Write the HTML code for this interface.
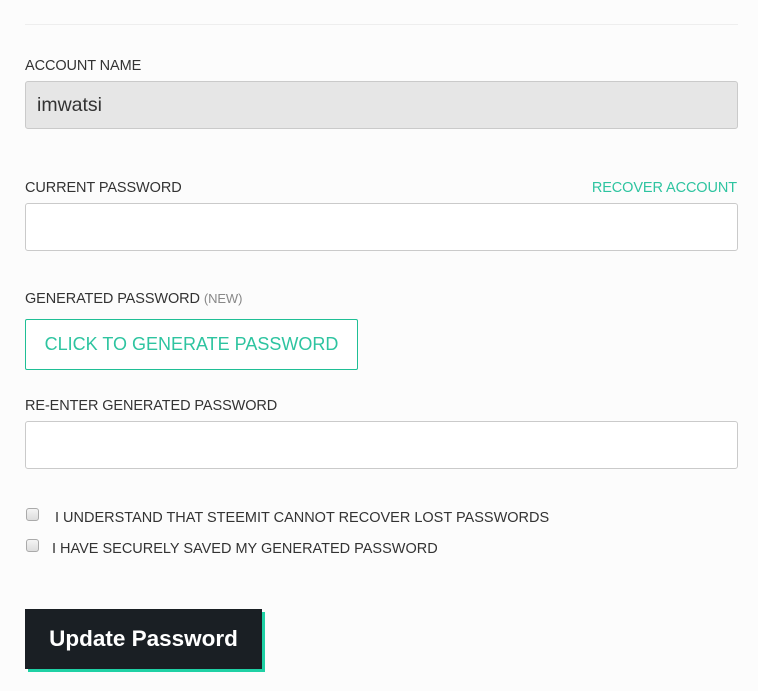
<!DOCTYPE html>
<html><head><style>
body{margin:0;width:758px;height:691px;background:#fcfcfc;font-family:"Liberation Sans",sans-serif;position:relative;overflow:hidden;color:#333}
.a{position:absolute}
.lbl{font-size:14.5px;letter-spacing:-0.1px;color:#333;line-height:16px}
.inp{left:25px;width:711px;height:46px;border:1px solid #cacaca;border-radius:3px;background:#fff;box-sizing:content-box}
.cb{width:11px;height:11px;border:1px solid #aaa;border-radius:3px;background:linear-gradient(#f4f4f4,#ddd);left:26px}
</style></head><body>
<div class="a" style="left:25px;top:24px;width:713px;height:1px;background:#eee"></div>
<div class="a lbl" style="left:25px;top:58px">ACCOUNT NAME</div>
<div class="a inp" style="top:81px;background:#e6e6e6;"></div>
<div class="a" style="left:37px;top:94px;font-size:19.5px;color:#333">imwatsi</div>
<div class="a lbl" style="left:25px;top:180px">CURRENT PASSWORD</div>
<div class="a lbl" style="right:21px;top:180px;color:#2ec4a0">RECOVER ACCOUNT</div>
<div class="a inp" style="top:203px"></div>
<div class="a lbl" style="left:25px;top:291px">GENERATED PASSWORD <span style="color:#888;font-size:13px">(NEW)</span></div>
<div class="a" style="left:25px;top:319px;width:331px;height:49px;border:1px solid #1fbf95;border-radius:2px;background:#fff;color:#2ec4a0;font-size:18px;line-height:49px;text-align:center">CLICK TO GENERATE PASSWORD</div>
<div class="a lbl" style="left:25px;top:398px">RE-ENTER GENERATED PASSWORD</div>
<div class="a inp" style="top:421px"></div>
<div class="a cb" style="top:508px"></div>
<div class="a lbl" style="left:55px;top:510px;letter-spacing:0px">I UNDERSTAND THAT STEEMIT CANNOT RECOVER LOST PASSWORDS</div>
<div class="a cb" style="top:539px"></div>
<div class="a lbl" style="left:52px;top:541px;letter-spacing:0px">I HAVE SECURELY SAVED MY GENERATED PASSWORD</div>
<div class="a" style="left:28px;top:612px;width:237px;height:60px;background:#1fd1a5"></div>
<div class="a" style="left:25px;top:609px;width:237px;height:60px;background:#1a1f24;color:#fff;font-weight:bold;font-size:22.5px;line-height:60px;text-align:center">Update Password</div>
</body></html>
